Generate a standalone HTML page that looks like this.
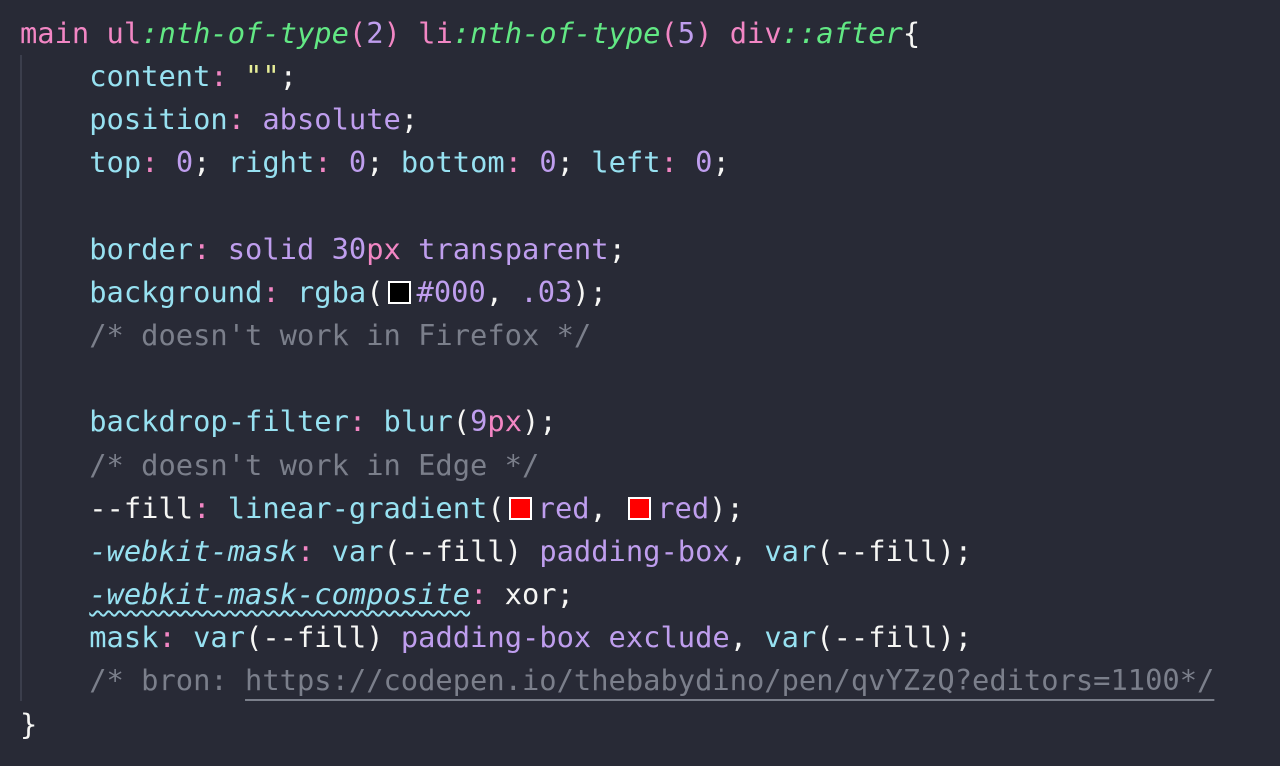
<!DOCTYPE html>
<html><head><meta charset="utf-8"><style>
html,body{margin:0;padding:0;background:#282a36;width:1280px;height:766px;overflow:hidden}
.code{position:absolute;left:20px;top:12px;font-family:"DejaVu Sans Mono","Liberation Mono",monospace;font-size:28.75px;line-height:43.15px;color:#f6f6f4;white-space:pre}
.guide{position:absolute;left:20px;top:55px;width:2px;height:646px;background:#3b3e4c}
.p{color:#f286c4}.g{color:#62e884;font-style:italic}.v{color:#bf9eee}.c{color:#97e1f1}.ci{color:#97e1f1;font-style:italic}.y{color:#e7ee98}.m{color:#7b7f8b}.w{color:#f6f6f4}
.sq{text-decoration:underline wavy #97e1f1;text-decoration-thickness:1.5px;text-underline-offset:6px}
.u{text-decoration:underline;text-decoration-color:#7b7f8b;text-underline-offset:9px;text-decoration-thickness:2px}
.box{display:inline-block;width:19px;height:19px;border:2px solid #fff;vertical-align:-2px;margin:0 6px 0 4px}
</style></head><body>
<div class="guide"></div>
<div class="code"><span class="p">main ul</span><span class="g">:nth-of-type</span><span class="p">(</span><span class="v">2</span><span class="p">) li</span><span class="g">:nth-of-type</span><span class="p">(</span><span class="v">5</span><span class="p">) div</span><span class="g">::after</span><span class="w">{</span>
    <span class="c">content</span><span class="p">:</span> <span class="y">""</span>;
    <span class="c">position</span><span class="p">:</span> <span class="v">absolute</span>;
    <span class="c">top</span><span class="p">:</span> <span class="v">0</span>; <span class="c">right</span><span class="p">:</span> <span class="v">0</span>; <span class="c">bottom</span><span class="p">:</span> <span class="v">0</span>; <span class="c">left</span><span class="p">:</span> <span class="v">0</span>;

    <span class="c">border</span><span class="p">:</span> <span class="v">solid 30</span><span class="p">px</span> <span class="v">transparent</span>;
    <span class="c">background</span><span class="p">:</span> <span class="c">rgba</span>(<span class="box" style="background:#000"></span><span class="v">#000</span>, <span class="v">.03</span>);
    <span class="m">/* doesn't work in Firefox */</span>

    <span class="c">backdrop-filter</span><span class="p">:</span> <span class="c">blur</span>(<span class="v">9</span><span class="p">px</span>);
    <span class="m">/* doesn't work in Edge */</span>
    --fill<span class="p">:</span> <span class="c">linear-gradient</span>(<span class="box" style="background:#f00"></span><span class="v">red</span>, <span class="box" style="background:#f00"></span><span class="v">red</span>);
    <span class="ci">-webkit-mask</span><span class="p">:</span> <span class="c">var</span>(--fill) <span class="v">padding-box</span>, <span class="c">var</span>(--fill);
    <span class="ci sq">-webkit-mask-composite</span><span class="p">:</span> xor;
    <span class="c">mask</span><span class="p">:</span> <span class="c">var</span>(--fill) <span class="v">padding-box exclude</span>, <span class="c">var</span>(--fill);
    <span class="m">/* bron: <span class="u">https://codepen.io/thebabydino/pen/qvYZzQ?editors=1100*/</span></span>
}</div>
</body></html>
